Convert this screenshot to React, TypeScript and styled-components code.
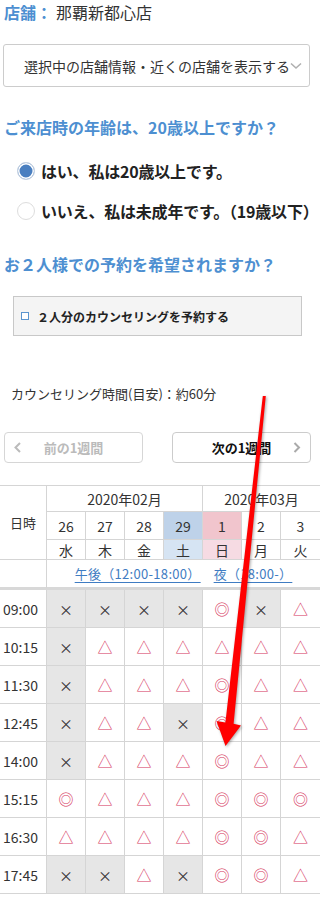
import React from "react";
import styled, { createGlobalStyle } from "styled-components";

const BLUE = "#4d8fd1";
const LINE = "#d5d5d5";
const MARK = "#d6365e";

const GlobalStyle = createGlobalStyle`
  html, body { margin: 0; padding: 0; background: #fff; }
  body {
    font-family: "Noto Sans CJK JP", "Noto Sans", sans-serif;
    color: #333;
  }
`;

const Page = styled.div`
  position: relative;
  width: 320px;
  height: 897px;
  overflow: hidden;
  background: #fff;
`;

const StoreLine = styled.div`
  padding-left: 4px;
  font-size: 16px;
  line-height: 25px;
  height: 25px;
  white-space: nowrap;
`;

const StoreLabel = styled.span`
  color: ${BLUE};
  font-weight: bold;
`;

const StoreName = styled.span`
  margin-left: 4px;
  color: #333;
`;

const SelectBox = styled.div`
  margin: 19px 10px 0 3px;
  height: 43px;
  box-sizing: border-box;
  border: 1px solid #cccccc;
  border-radius: 3px;
  display: flex;
  align-items: center;
  padding-left: 20px;
  font-size: 14px;
  line-height: 20px;
  white-space: nowrap;
  overflow: hidden;
  color: #333;
`;

const Heading = styled.div<{ $top: number }>`
  margin-top: ${(p) => p.$top}px;
  padding-left: 4px;
  font-size: 16px;
  font-weight: bold;
  line-height: 25px;
  height: 25px;
  color: ${BLUE};
  white-space: nowrap;
`;

const RadioGroup = styled.div`
  margin-top: 11px;
  padding-left: 17px;
`;

const RadioRow = styled.div`
  height: 40px;
  display: flex;
  align-items: center;
  gap: 6px;
  font-size: 16px;
  font-weight: bold;
  letter-spacing: -0.2px;
  color: #222;
  white-space: nowrap;
`;

const RadioMark = styled.span<{ $checked?: boolean }>`
  flex: none;
  width: 18px;
  height: 18px;
  box-sizing: border-box;
  border-radius: 50%;
  border: 1px solid ${(p) => (p.$checked ? "#c9d4e2" : "#dddddd")};
  background: ${(p) => (p.$checked ? "#4a7fc0" : "#fff")};
  box-shadow: ${(p) => (p.$checked ? "inset 0 0 0 1.5px #ffffff" : "none")};
`;

const CheckPanel = styled.div`
  margin: 19px 18px 0 13px;
  height: 40px;
  box-sizing: border-box;
  border: 1px solid #c8c8c8;
  background: #f4f4f4;
  display: flex;
  align-items: center;
  padding-left: 7px;
  gap: 8px;
  font-size: 12px;
  font-weight: bold;
  color: #222;
  white-space: nowrap;
`;

const CheckSquare = styled.span`
  flex: none;
  width: 8px;
  height: 8px;
  box-sizing: border-box;
  border: 1px solid #5b95cf;
  background: #fff;
`;

const Note = styled.div`
  margin-top: 48px;
  padding-left: 11px;
  font-size: 13px;
  line-height: 20px;
  height: 20px;
  color: #333;
  white-space: nowrap;
`;

const WeekNav = styled.div`
  margin-top: 28px;
  padding-left: 4px;
  display: flex;
  gap: 29px;
`;

const WeekButton = styled.div<{ $disabled?: boolean }>`
  width: 139px;
  height: 31px;
  box-sizing: border-box;
  border: 1px solid ${(p) => (p.$disabled ? "#d6d6d6" : "#cccccc")};
  border-radius: 4px;
  display: grid;
  grid-template-columns: 1fr auto 1fr;
  align-items: center;
  padding: 0 9px;
  font-size: 13px;
  font-weight: bold;
  color: ${(p) => (p.$disabled ? "#bbbbbb" : "#111")};
  white-space: nowrap;
`;

const ChevronSlot = styled.span<{ $end?: boolean }>`
  display: flex;
  justify-content: ${(p) => (p.$end ? "flex-end" : "flex-start")};
`;

const Grid = styled.div`
  margin-top: 22px;
  border-top: 1px solid ${LINE};
  display: grid;
  grid-template-columns: 47px repeat(7, 39px);
  grid-template-rows: 26px 28px 20px 30px repeat(8, 38px);
`;

const Cell = styled.div<{
  $bg?: string;
  $last?: boolean;
  $thick?: boolean;
  $col?: string;
  $row?: string;
  $left?: boolean;
  $size?: number;
}>`
  box-sizing: border-box;
  grid-column: ${(p) => p.$col || "auto"};
  grid-row: ${(p) => p.$row || "auto"};
  border-right: ${(p) => (p.$last ? "none" : `1px solid ${LINE}`)};
  border-bottom: ${(p) => (p.$thick ? "3px solid #d8d8d8" : `1px solid ${LINE}`)};
  background: ${(p) => p.$bg || "#fff"};
  display: flex;
  align-items: center;
  justify-content: ${(p) => (p.$left ? "flex-start" : "center")};
  padding-left: ${(p) => (p.$left ? "3px" : "0")};
  font-size: ${(p) => p.$size || 14}px;
  line-height: 1;
  color: #333;
  white-space: nowrap;
`;

const PeriodLink = styled.span`
  color: #3f7cc2;
  text-decoration: underline;
  text-underline-offset: 3px;
  font-size: 13px;
  letter-spacing: 0.3px;
`;

const PeriodWrap = styled.span`
  display: flex;
  gap: 13px;
`;

const Mark = styled.span<{ $kind: string }>`
  font-size: ${(p) => (p.$kind === "x" ? 14 : 15)}px;
  color: ${(p) => (p.$kind === "x" ? "#333" : MARK)};
`;

const ArrowSvg = styled.svg`
  position: absolute;
  left: 0;
  top: 0;
  pointer-events: none;
  filter: drop-shadow(1px 1px 1.5px rgba(0, 0, 0, 0.35));
`;

const Chevron = ({ dir, color }: { dir: "left" | "right" | "down"; color: string }) => {
  if (dir === "down") {
    return (
      <svg width="12" height="8" viewBox="0 0 12 8" style={{ flex: "none" }}>
        <polyline points="1,1.5 6,6 11,1.5" fill="none" stroke={color} strokeWidth="1.6" />
      </svg>
    );
  }
  const pts = dir === "left" ? "6,1 1.5,5.5 6,10" : "1.5,1 6,5.5 1.5,10";
  return (
    <svg width="8" height="11" viewBox="0 0 8 11">
      <polyline points={pts} fill="none" stroke={color} strokeWidth="2" />
    </svg>
  );
};

const days = [
  { d: "26", w: "水" },
  { d: "27", w: "木" },
  { d: "28", w: "金" },
  { d: "29", w: "土", dayBg: "#bed2e9", wBg: "#d6e4f3" },
  { d: "1", w: "日", dayBg: "#f1c5cd", wBg: "#f6dbe3" },
  { d: "2", w: "月" },
  { d: "3", w: "火" },
];

const rows: { t: string; v: string }[] = [
  { t: "09:00", v: "xxxxoxt" },
  { t: "10:15", v: "xtttttt" },
  { t: "11:30", v: "xtttott" },
  { t: "12:45", v: "xttxott" },
  { t: "14:00", v: "xtttott" },
  { t: "15:15", v: "otttooo" },
  { t: "16:30", v: "ttttoot" },
  { t: "17:45", v: "xxtxoot" },
];

const glyph = (k: string) => (k === "x" ? "×" : k === "o" ? "◎" : "△");

export default function App() {
  return (
    <>
      <GlobalStyle />
      <Page>
        <StoreLine>
          <StoreLabel>店舗：</StoreLabel>
          <StoreName>那覇新都心店</StoreName>
        </StoreLine>

        <SelectBox>
          選択中の店舗情報・近くの店舗を表示する
          <Chevron dir="down" color="#b0b0b0" />
        </SelectBox>

        <Heading $top={28}>ご来店時の年齢は、20歳以上ですか？</Heading>
        <RadioGroup>
          <RadioRow>
            <RadioMark $checked />
            はい、私は20歳以上です。
          </RadioRow>
          <RadioRow>
            <RadioMark />
            いいえ、私は未成年です。（19歳以下）
          </RadioRow>
        </RadioGroup>

        <Heading $top={21}>お２人様での予約を希望されますか？</Heading>
        <CheckPanel>
          <CheckSquare />
          ２人分のカウンセリングを予約する
        </CheckPanel>

        <Note>カウンセリング時間(目安)：約60分</Note>

        <WeekNav>
          <WeekButton $disabled>
            <ChevronSlot>
              <Chevron dir="left" color="#bbbbbb" />
            </ChevronSlot>
            前の1週間
            <ChevronSlot />
          </WeekButton>
          <WeekButton>
            <ChevronSlot />
            次の1週間
            <ChevronSlot $end>
              <Chevron dir="right" color="#aaaaaa" />
            </ChevronSlot>
          </WeekButton>
        </WeekNav>

        <Grid>
          <Cell $col="1" $row="1 / span 3" $size={13}>
            日時
          </Cell>
          <Cell $col="2 / span 4" $row="1">
            2020年02月
          </Cell>
          <Cell $col="6 / span 3" $row="1" $last>
            2020年03月
          </Cell>
          {days.map((d, i) => (
            <Cell key={"d" + i} $row="2" $col={String(i + 2)} $bg={d.dayBg} $last={i === 6}>
              {d.d}
            </Cell>
          ))}
          {days.map((d, i) => (
            <Cell key={"w" + i} $row="3" $col={String(i + 2)} $bg={d.wBg} $last={i === 6}>
              {d.w}
            </Cell>
          ))}
          <Cell $col="1" $row="4" $thick />
          <Cell $col="2 / span 7" $row="4" $thick $last>
            <PeriodWrap>
              <PeriodLink>午後（12:00-18:00）</PeriodLink>
              <PeriodLink>夜（18:00-）</PeriodLink>
            </PeriodWrap>
          </Cell>
          {rows.map((r, ri) => (
            <React.Fragment key={r.t}>
              <Cell $col="1" $row={String(ri + 5)} $left>
                {r.t}
              </Cell>
              {r.v.split("").map((k, ci) => (
                <Cell
                  key={ci}
                  $col={String(ci + 2)}
                  $row={String(ri + 5)}
                  $bg={k === "x" ? "#e6e6e6" : "#fff"}
                  $last={ci === 6}
                >
                  <Mark $kind={k}>{glyph(k)}</Mark>
                </Cell>
              ))}
            </React.Fragment>
          ))}
        </Grid>

        <ArrowSvg width="320" height="897" viewBox="0 0 320 897">
          <polygon
            points="262.8,396 265.8,396 233.6,723.8 241,725.5 225.5,746 216.5,721 225.4,722.6"
            fill="#ff0000"
          />
        </ArrowSvg>
      </Page>
    </>
  );
}
